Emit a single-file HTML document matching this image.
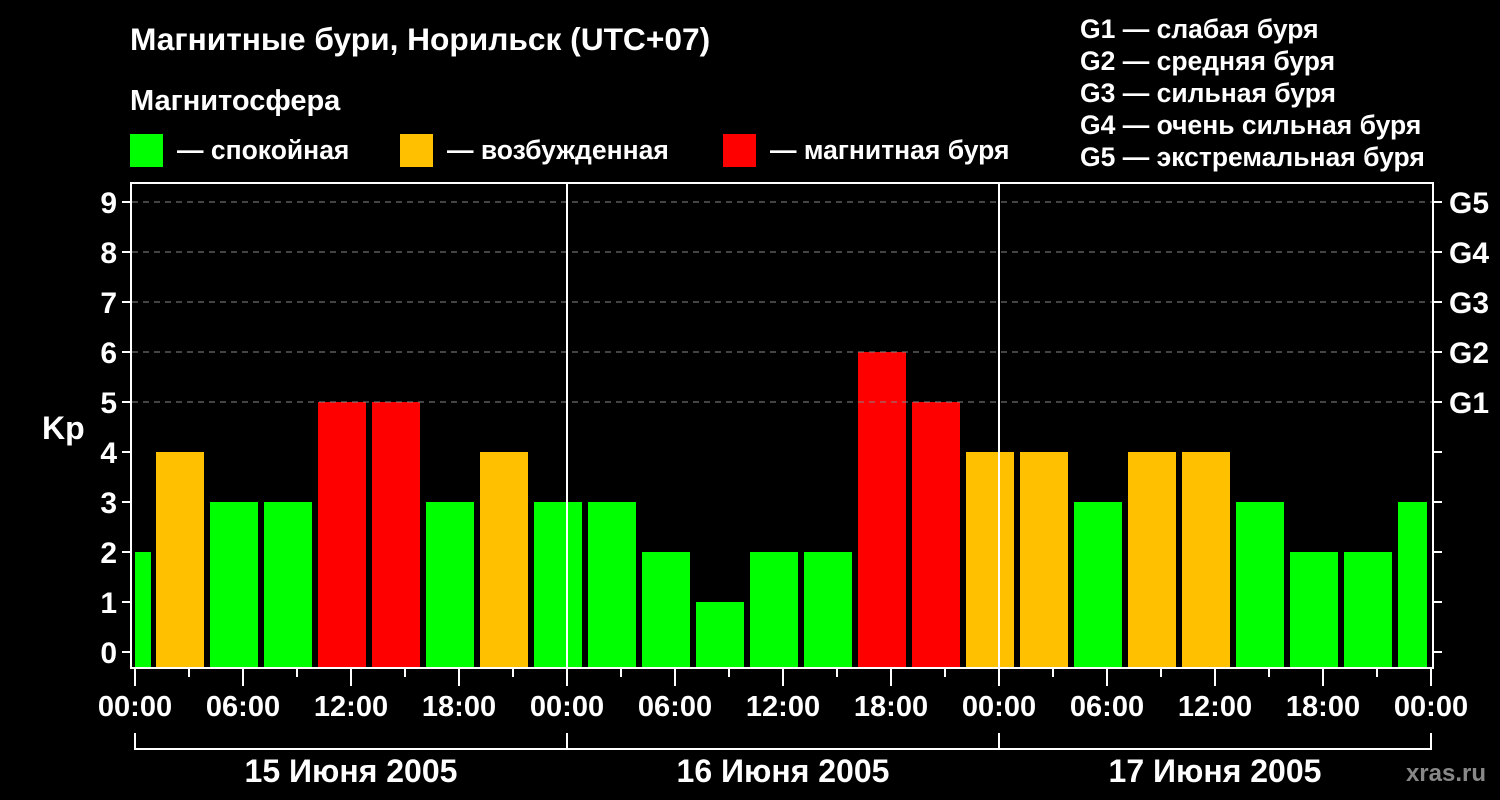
<!DOCTYPE html><html><head><meta charset="utf-8"><style>body{margin:0;background:#000}svg{display:block}text{font-family:"Liberation Sans",sans-serif;font-weight:bold;fill:#fff}</style></head><body>
<svg width="1500" height="800" viewBox="0 0 1500 800">
<rect width="1500" height="800" fill="#000"/>
<text x="130" y="50" font-size="31.7">Магнитные бури, Норильск (UTC+07)</text>
<text x="130" y="110" font-size="29">Магнитосфера</text>
<rect x="130" y="134" width="33" height="33" fill="#00ff00"/><text x="177" y="159" font-size="26.5">— спокойная</text>
<rect x="400" y="134" width="33" height="33" fill="#ffc000"/><text x="447" y="159" font-size="26.5">— возбужденная</text>
<rect x="723" y="134" width="33" height="33" fill="#ff0000"/><text x="770" y="159" font-size="26.5">— магнитная буря</text>
<g font-size="26.5"><text x="1080" y="38">G1 — слабая буря</text><text x="1080" y="70">G2 — средняя буря</text><text x="1080" y="102">G3 — сильная буря</text><text x="1080" y="134">G4 — очень сильная буря</text><text x="1080" y="166">G5 — экстремальная буря</text></g>
<g fill="#00ff00">
<rect x="135" y="552" width="16" height="116"/>
<rect x="210" y="502" width="48" height="166"/><rect x="264" y="502" width="48" height="166"/>
<rect x="426" y="502" width="48" height="166"/><rect x="534" y="502" width="48" height="166"/>
<rect x="588" y="502" width="48" height="166"/><rect x="642" y="552" width="48" height="116"/>
<rect x="696" y="602" width="48" height="66"/><rect x="750" y="552" width="48" height="116"/>
<rect x="804" y="552" width="48" height="116"/><rect x="1074" y="502" width="48" height="166"/>
<rect x="1236" y="502" width="48" height="166"/><rect x="1290" y="552" width="48" height="116"/>
<rect x="1344" y="552" width="48" height="116"/><rect x="1398" y="502" width="29" height="166"/>
</g>
<g fill="#ffc000">
<rect x="156" y="452" width="48" height="216"/><rect x="480" y="452" width="48" height="216"/>
<rect x="966" y="452" width="48" height="216"/><rect x="1020" y="452" width="48" height="216"/>
<rect x="1128" y="452" width="48" height="216"/><rect x="1182" y="452" width="48" height="216"/>
</g>
<g fill="#ff0000">
<rect x="318" y="402" width="48" height="266"/><rect x="372" y="402" width="48" height="266"/>
<rect x="858" y="352" width="48" height="316"/><rect x="912" y="402" width="48" height="266"/>
</g>
<g stroke="#888" stroke-dasharray="6,5" stroke-width="1">
<line x1="132" y1="202" x2="1432" y2="202"/><line x1="132" y1="252" x2="1432" y2="252"/>
<line x1="132" y1="302" x2="1432" y2="302"/><line x1="132" y1="352" x2="1432" y2="352"/>
<line x1="132" y1="402" x2="1432" y2="402"/>
</g>
<g stroke="#fff" stroke-width="2" fill="none">
<rect x="131" y="183" width="1302" height="485"/>
<line x1="567" y1="183" x2="567" y2="668"/><line x1="999" y1="183" x2="999" y2="668"/>
<path d="M122 202H131M122 252H131M122 302H131M122 352H131M122 402H131M122 452H131M122 502H131M122 552H131M122 602H131M122 652H131"/>
<path d="M1433 202H1442M1433 252H1442M1433 302H1442M1433 352H1442M1433 402H1442M1433 452H1442M1433 502H1442M1433 552H1442M1433 602H1442M1433 652H1442"/>
<path d="M135 668V686M243 668V686M351 668V686M459 668V686M567 668V686M675 668V686M783 668V686M891 668V686M999 668V686M1107 668V686M1215 668V686M1323 668V686M1431 668V686"/>
<path d="M189 668V677M297 668V677M405 668V677M513 668V677M621 668V677M729 668V677M837 668V677M945 668V677M1053 668V677M1161 668V677M1269 668V677M1377 668V677"/>
<path d="M135 733V749H1431V733M567 733V749M999 733V749"/>
</g>
<g font-size="30" text-anchor="end"><text x="117" y="213">9</text><text x="117" y="263">8</text><text x="117" y="313">7</text><text x="117" y="363">6</text><text x="117" y="413">5</text><text x="117" y="463">4</text><text x="117" y="513">3</text><text x="117" y="563">2</text><text x="117" y="613">1</text><text x="117" y="663">0</text></g>
<text x="42" y="439" font-size="32">Kp</text>
<g font-size="30"><text x="1449" y="213">G5</text><text x="1449" y="263">G4</text><text x="1449" y="313">G3</text><text x="1449" y="363">G2</text><text x="1449" y="413">G1</text></g>
<g font-size="29" text-anchor="middle"><text x="135" y="716">00:00</text><text x="243" y="716">06:00</text><text x="351" y="716">12:00</text><text x="459" y="716">18:00</text><text x="567" y="716">00:00</text><text x="675" y="716">06:00</text><text x="783" y="716">12:00</text><text x="891" y="716">18:00</text><text x="999" y="716">00:00</text><text x="1107" y="716">06:00</text><text x="1215" y="716">12:00</text><text x="1323" y="716">18:00</text><text x="1431" y="716">00:00</text></g>
<g font-size="32" text-anchor="middle"><text x="351" y="782">15 Июня 2005</text><text x="783" y="782">16 Июня 2005</text><text x="1215" y="782">17 Июня 2005</text></g>
<text x="1486" y="781" font-size="24" text-anchor="end" style="fill:#888">xras.ru</text>
</svg></body></html>
